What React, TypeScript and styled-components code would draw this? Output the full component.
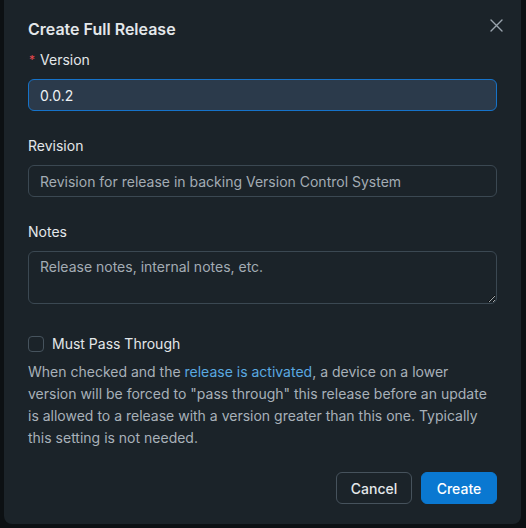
import React, { useState } from "react";
import styled, { createGlobalStyle } from "styled-components";

const GlobalStyle = createGlobalStyle`
  html, body {
    margin: 0;
    padding: 0;
    background: #0c1013;
  }
  body {
    font-family: Inter, "Noto Sans", "Liberation Sans", sans-serif;
    -webkit-font-smoothing: antialiased;
  }
`;

const Backdrop = styled.div`
  width: 526px;
  height: 528px;
  background: #0c1013;
  padding: 0 5px 0 4px;
  box-sizing: border-box;
`;

const Modal = styled.div`
  position: relative;
  background: #1b2329;
  border-radius: 0 0 8px 8px;
  padding: 17px 24px 20px 24px;
  box-sizing: border-box;
  height: 524px;
  display: flex;
  flex-direction: column;
`;

const Title = styled.h2`
  margin: 0 0 9px 0;
  font-size: 16px;
  line-height: 24px;
  font-weight: 600;
  color: #e3e7ea;
`;

const CloseButton = styled.button`
  position: absolute;
  top: 14px;
  right: 14px;
  width: 22px;
  height: 22px;
  padding: 0;
  border: none;
  background: transparent;
  display: flex;
  align-items: center;
  justify-content: center;
  cursor: pointer;
`;

const Field = styled.div`
  display: flex;
  flex-direction: column;
  margin-bottom: 25px;
`;

const Label = styled.label`
  font-size: 14px;
  line-height: 20px;
  color: #e3e7ea;
  margin-bottom: 9px;
  display: flex;
  align-items: center;
`;

const Required = styled.span`
  color: #e5484d;
  font-size: 12px;
  margin-right: 5px;
  margin-left: 1px;
`;

const TextInput = styled.input<{ $focused?: boolean }>`
  height: 32px;
  box-sizing: border-box;
  border-radius: 6px;
  border: 1px solid ${(p) => (p.$focused ? "#1673c9" : "#3b4852")};
  background: ${(p) => (p.$focused ? "#2b3a4b" : "#1b2329")};
  color: #eef1f4;
  font-family: inherit;
  font-size: 14px;
  padding: 0 11px;
  outline: none;
  &::placeholder {
    color: #a3acb4;
  }
`;

const TextArea = styled.textarea`
  height: 53px;
  box-sizing: border-box;
  border-radius: 6px;
  border: 1px solid #3b4852;
  background: #1b2329;
  color: #eef1f4;
  font-family: inherit;
  font-size: 14px;
  line-height: 20px;
  padding: 5px 11px;
  outline: none;
  resize: vertical;
  &::placeholder {
    color: #a3acb4;
  }
`;

const CheckRow = styled.label`
  display: flex;
  align-items: center;
  gap: 8px;
  font-size: 14px;
  line-height: 22px;
  color: #e3e7ea;
  margin-top: 4px;
  margin-bottom: 6px;
  cursor: pointer;
`;

const Box = styled.span<{ $checked: boolean }>`
  width: 16px;
  height: 16px;
  box-sizing: border-box;
  border-radius: 4px;
  border: 1px solid #46535d;
  background: ${(p) => (p.$checked ? "#0a78d1" : "transparent")};
`;

const Help = styled.p`
  margin: 0;
  font-size: 14px;
  line-height: 22px;
  color: #a8b1b9;
`;

const Link = styled.a`
  color: #5aa9e0;
  text-decoration: none;
`;

const Footer = styled.div`
  margin-top: auto;
  display: flex;
  justify-content: flex-end;
  gap: 9px;
`;

const Button = styled.button<{ $primary?: boolean }>`
  height: 32px;
  width: 76px;
  padding: 0;
  box-sizing: border-box;
  border-radius: 6px;
  font-family: inherit;
  font-size: 14px;
  font-weight: 500;
  cursor: pointer;
  border: 1px solid ${(p) => (p.$primary ? "#0a78d1" : "#46525c")};
  background: ${(p) => (p.$primary ? "#0a78d1" : "transparent")};
  color: ${(p) => (p.$primary ? "#ffffff" : "#e3e7ea")};
`;

export default function App() {
  const [version, setVersion] = useState("0.0.2");
  const [passThrough, setPassThrough] = useState(false);

  return (
    <Backdrop>
      <GlobalStyle />
      <Modal>
        <Title>Create Full Release</Title>
        <CloseButton aria-label="Close">
          <svg width="13" height="13" viewBox="0 0 13 13">
            <path d="M1 1L12 12M12 1L1 12" stroke="#9aa4ad" strokeWidth="1.4" strokeLinecap="round" />
          </svg>
        </CloseButton>

        <Field>
          <Label>
            <Required>*</Required>Version
          </Label>
          <TextInput $focused value={version} onChange={(e) => setVersion(e.target.value)} />
        </Field>

        <Field>
          <Label>Revision</Label>
          <TextInput placeholder="Revision for release in backing Version Control System" />
        </Field>

        <Field>
          <Label>Notes</Label>
          <TextArea placeholder="Release notes, internal notes, etc." />
        </Field>

        <CheckRow onClick={() => setPassThrough(!passThrough)}>
          <Box $checked={passThrough} />
          Must Pass Through
        </CheckRow>
        <Help>
          When checked and the <Link href="#">release is activated</Link>, a device on a lower
          version will be forced to "pass through" this release before an update is allowed to a
          release with a version greater than this one. Typically this setting is not needed.
        </Help>

        <Footer>
          <Button>Cancel</Button>
          <Button $primary>Create</Button>
        </Footer>
      </Modal>
    </Backdrop>
  );
}
